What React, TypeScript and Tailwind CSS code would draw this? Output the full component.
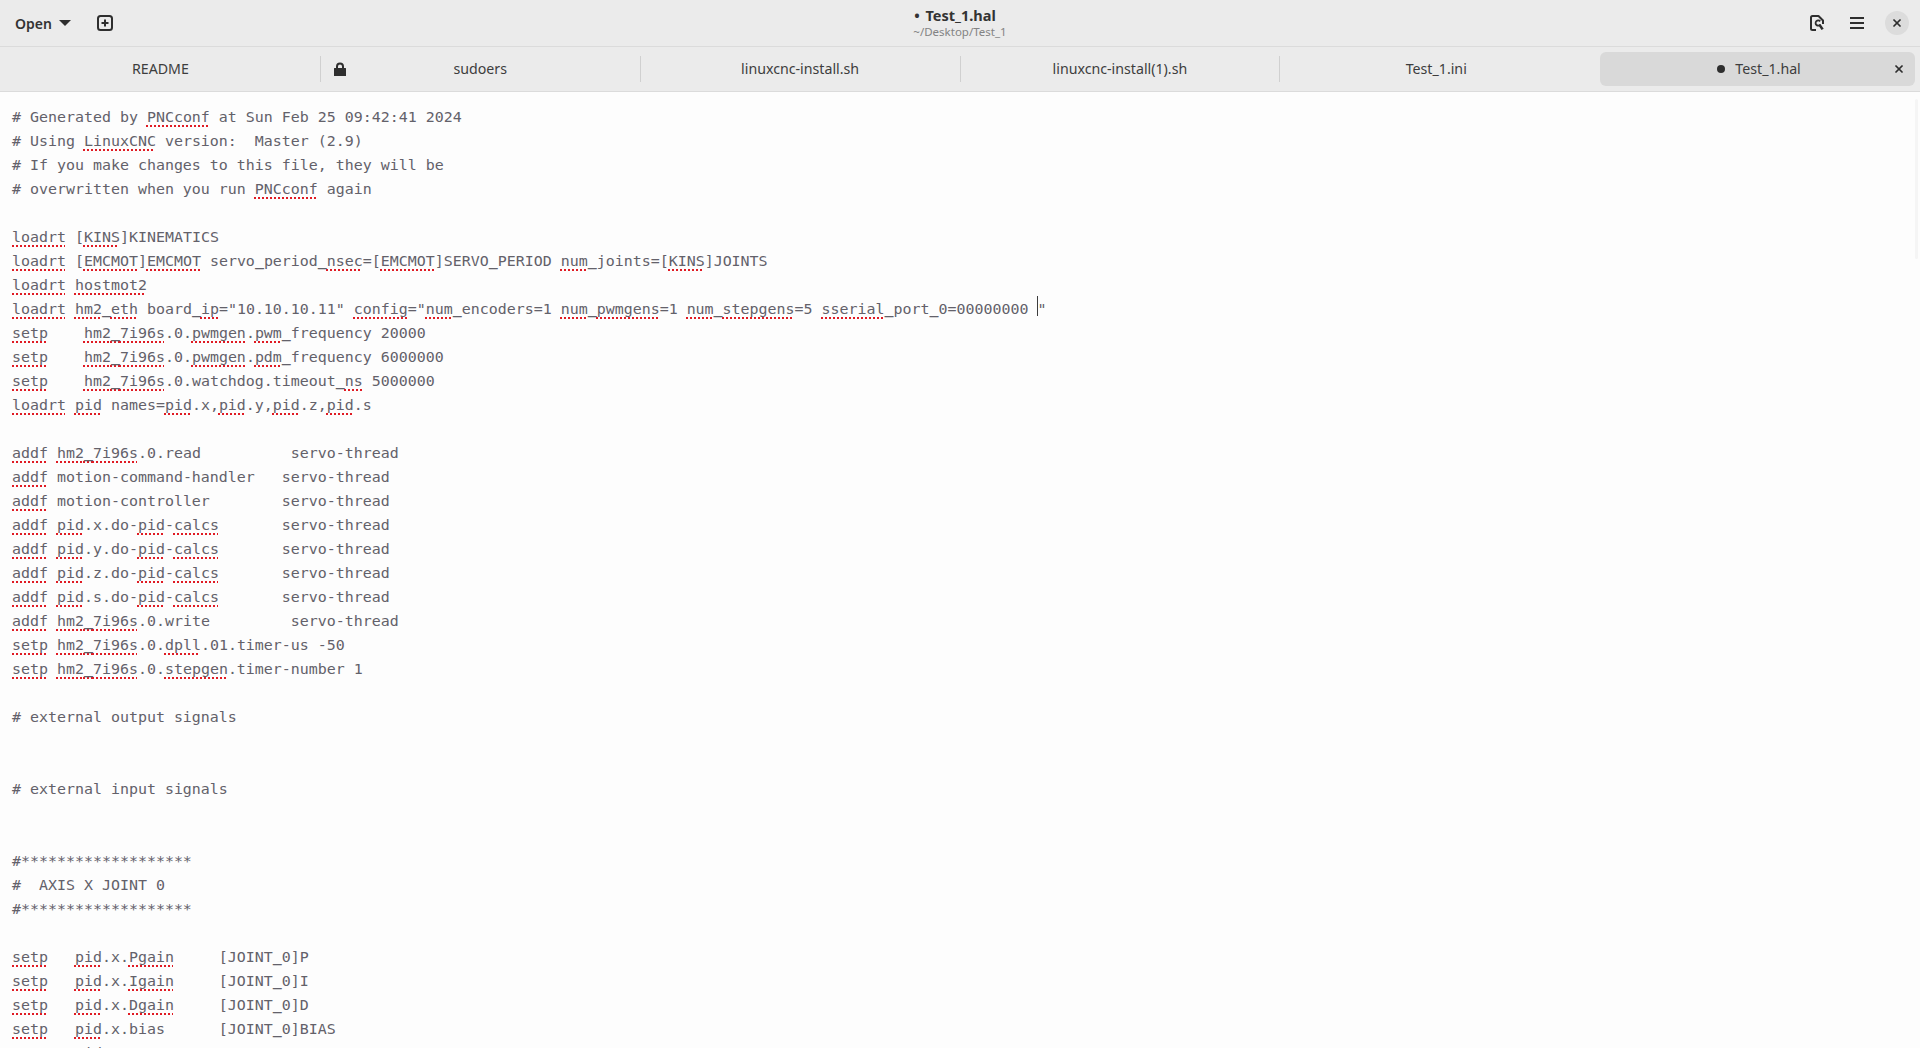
import React from 'react';
import { X } from 'lucide-react';

const lines = [
  '# Generated by ~PNCconf~ at Sun Feb 25 09:42:41 2024',
  '# Using ~LinuxCNC~ version:  Master (2.9)',
  '# If you make changes to this file, they will be',
  '# overwritten when you run ~PNCconf~ again',
  '',
  '~loadrt~ [~KINS~]KINEMATICS',
  '~loadrt~ [~EMCMOT~]~EMCMOT~ servo_period_~nsec~=[~EMCMOT~]SERVO_PERIOD ~num~_joints=[~KINS~]JOINTS',
  '~loadrt~ ~hostmot2~',
  '~loadrt~ ~hm2~_~eth~ board_~ip~="10.10.10.11" ~config~="~num~_encoders=1 ~num~_~pwmgens~=1 ~num~_~stepgens~=5 ~sserial~_port_0=00000000 |"',
  '~setp~    ~hm2_7i96s~.0.~pwmgen~.~pwm~_frequency 20000',
  '~setp~    ~hm2_7i96s~.0.~pwmgen~.~pdm~_frequency 6000000',
  '~setp~    ~hm2_7i96s~.0.watchdog.timeout_~ns~ 5000000',
  '~loadrt~ ~pid~ names=~pid~.x,~pid~.y,~pid~.z,~pid~.s',
  '',
  '~addf~ ~hm2_7i96s~.0.read          servo-thread',
  '~addf~ motion-command-handler   servo-thread',
  '~addf~ motion-controller        servo-thread',
  '~addf~ ~pid~.x.do-~pid~-~calcs~       servo-thread',
  '~addf~ ~pid~.y.do-~pid~-~calcs~       servo-thread',
  '~addf~ ~pid~.z.do-~pid~-~calcs~       servo-thread',
  '~addf~ ~pid~.s.do-~pid~-~calcs~       servo-thread',
  '~addf~ ~hm2_7i96s~.0.write         servo-thread',
  '~setp~ ~hm2_7i96s~.0.~dpll~.01.timer-us -50',
  '~setp~ ~hm2_7i96s~.0.~stepgen~.timer-number 1',
  '',
  '# external output signals',
  '',
  '',
  '# external input signals',
  '',
  '',
  '#*******************',
  '#  AXIS X JOINT 0',
  '#*******************',
  '',
  '~setp~   ~pid~.x.~Pgain~     [JOINT_0]P',
  '~setp~   ~pid~.x.~Igain~     [JOINT_0]I',
  '~setp~   ~pid~.x.~Dgain~     [JOINT_0]D',
  '~setp~   ~pid~.x.bias      [JOINT_0]BIAS',
  '~setp~   ~pid~',
];

const tabs = ['README', 'sudoers', 'linuxcnc-install.sh', 'linuxcnc-install(1).sh', 'Test_1.ini', 'Test_1.hal'];

function Chars({ text }: { text: string }) {
  const bits = text.split('_');
  return (
    <>
      {bits.map((bit, i) => (
        <React.Fragment key={i}>
          {i > 0 && <span className="font-bold">_</span>}
          {bit}
        </React.Fragment>
      ))}
    </>
  );
}

function CodeLine({ text }: { text: string }) {
  const parts = text.split('~');
  return (
    <div className="h-6 leading-6">
      {parts.map((part, i) => {
        if (i % 2 === 1) {
          return (
            <span
              key={i}
              className="underline decoration-dotted decoration-[#e01b24] decoration-2 underline-offset-[3px] [text-decoration-skip-ink:none]"
            >
              <Chars text={part} />
            </span>
          );
        }
        const bits = part.split('|');
        return (
          <span key={i}>
            <Chars text={bits[0]} />
            {bits.length > 1 && (
              <>
                <span className="relative">
                  <span className="absolute left-0 top-[-4px] h-[20px] w-px bg-[#3d3d3d]" />
                </span>
                {bits[1]}
              </>
            )}
          </span>
        );
      })}
      {text === '' && ' '}
    </div>
  );
}

function SaveIcon() {
  return (
    <svg width="16" height="16" viewBox="0 0 16 16" fill="none" stroke="#2e2e2e">
      <path d="M7 15H3.5A1.5 1.5 0 0 1 2 13.5v-11A1.5 1.5 0 0 1 3.5 1H9.5L14 5.5V9" strokeWidth="2" strokeLinejoin="round" />
      <path d="M11.2 6.4A2.6 2.6 0 1 0 11.3 9.6" strokeWidth="1.8" />
      <path d="M10.4 9.6L13.6 14.4" strokeWidth="2.6" />
    </svg>
  );
}

function MenuIcon() {
  return (
    <svg width="16" height="16" viewBox="0 0 16 16" fill="#2e2e2e">
      <rect x="1" y="2" width="14" height="2" />
      <rect x="1" y="7" width="14" height="2" />
      <rect x="1" y="12" width="14" height="2" />
    </svg>
  );
}

export default function App() {
  return (
    <div className="relative flex h-screen flex-col overflow-hidden bg-[#fdfdfd] font-['Noto_Sans',sans-serif] text-[#333333]">
      <header className="grid h-[47px] shrink-0 grid-cols-[1fr_auto_1fr] items-center border-b border-[#dbdbdb] bg-[#ebebeb]">
        <div className="flex items-center pl-[15px]">
          <span className="text-[14px] font-semibold">Open</span>
          <span className="ml-[7px] h-0 w-0 border-x-[6px] border-t-[6px] border-x-transparent border-t-[#2e2e2e]" />
          <svg className="ml-[26px]" width="16" height="16" viewBox="0 0 16 16" fill="none">
            <rect x="1" y="1" width="14" height="14" rx="2.5" stroke="#2e2e2e" strokeWidth="2" />
            <path d="M8 4.5v7M4.5 8h7" stroke="#2e2e2e" strokeWidth="2" />
          </svg>
        </div>
        <div className="flex flex-col items-center">
          <div className="-mt-px pr-[10px] text-[14.5px] font-bold leading-[18px]">
            <span className="mr-[2px]">•</span> Test_1.hal
          </div>
          <div className="mt-px text-[11.5px] leading-[14px] text-[#838383]">~/Desktop/Test_1</div>
        </div>
        <div className="flex items-center justify-end pr-[11px]">
          <span className="mr-6 flex">
            <SaveIcon />
          </span>
          <span className="mr-5 flex">
            <MenuIcon />
          </span>
          <div className="flex h-6 w-6 items-center justify-center rounded-full bg-[#dcdcdc]">
            <X size={12} strokeWidth={3.5} color="#2e2e2e" />
          </div>
        </div>
      </header>

      <nav className="grid h-[45px] shrink-0 grid-cols-6 items-center border-b border-[#dbdbdb] bg-[#ebebeb] pl-px text-[14.2px] text-[#3d3d3d]">
        {tabs.map((tab, i) => {
          const active = i === 5;
          return (
            <div
              key={tab}
              className={
                active
                  ? 'mr-[5px] grid h-[34px] grid-cols-[35px_1fr_32px] items-center rounded-md bg-[#d9d9d9]'
                  : i === 4
                    ? 'grid h-[26px] grid-cols-[38px_1fr_46px] items-center'
                    : 'grid h-[26px] grid-cols-[38px_1fr_38px] items-center border-r border-[#d0d0d0]'
              }
            >
              <span className="flex justify-center">
                {tab === 'sudoers' && (
                  <svg width="14" height="14" viewBox="0 0 14 14" fill="#2e2e2e">
                    <path d="M3 6V4.5a4 4 0 0 1 8 0V6h1.5a.5.5 0 0 1 .5.5V14H1V6.5a.5.5 0 0 1 .5-.5H3Zm2 0h4V4.5a2 2 0 0 0-4 0V6Z" />
                  </svg>
                )}
              </span>
              <span className="flex items-center justify-center gap-[10px]">
                {active && <span className="h-2 w-2 rounded-full bg-[#2e2e2e]" />}
                {tab}
              </span>
              <span className="flex justify-center">
                {active && <X size={12} strokeWidth={3.5} color="#2e2e2e" />}
              </span>
            </div>
          );
        })}
      </nav>

      <main className="min-h-0 flex-1 whitespace-pre pl-3 pt-[13px] font-['DejaVu_Sans_Mono',monospace] text-[14.95px] text-[#63616a]">
        {lines.map((line, i) => (
          <CodeLine key={i} text={line} />
        ))}
      </main>

      <div className="absolute right-[2px] top-[99px] h-[160px] w-[3px] rounded-full bg-[#f5f5f5]" />
    </div>
  );
}
